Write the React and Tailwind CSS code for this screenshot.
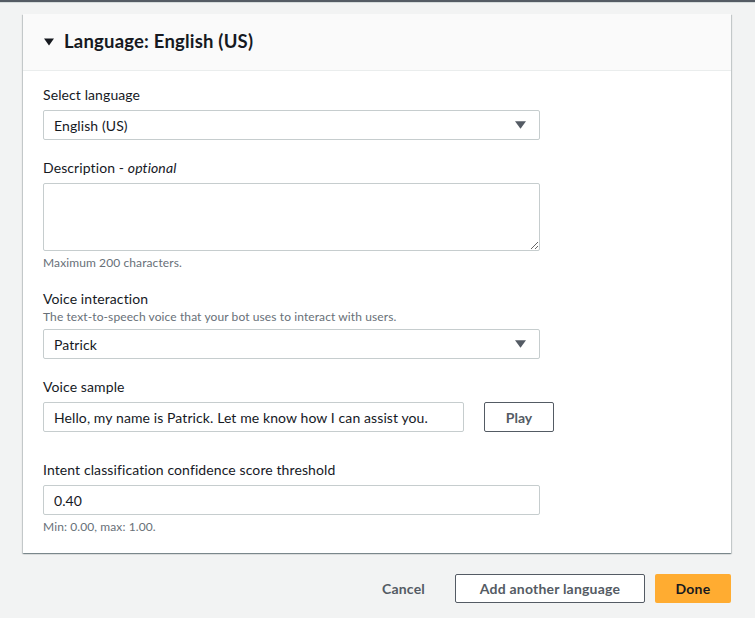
import { useState } from "react";

const font = { fontFamily: "Lato, 'Open Sans', sans-serif" };

function Caret({ className }) {
  return (
    <svg viewBox="0 0 10 7" className={className} fill="currentColor">
      <path d="M0 0 L10 0 L5 7 Z" />
    </svg>
  );
}

function Field({ label, description, constraint, children, className = "" }) {
  return (
    <div className={"flex flex-col " + className}>
      <label className="text-[14px] leading-[20px] text-[#16191f] tracking-[0.1px]">{label}</label>
      {description && (
        <div className="text-[12px] leading-[16px] text-[#687078] tracking-[0.1px]">{description}</div>
      )}
      <div className={description ? "mt-[4px]" : "mt-[5px]"}>{children}</div>
      {constraint && (
        <div className="mt-[4px] text-[12px] leading-[16px] text-[#687078] tracking-[0.1px]">{constraint}</div>
      )}
    </div>
  );
}

function Select({ value }) {
  return (
    <div className="w-[497px] h-[30px] border border-[#c6cdce] rounded-[2px] bg-white flex items-center justify-between pl-[10px] pr-[13px] text-[14px] text-[#16191f] tracking-[0.1px]">
      <span>{value}</span>
      <Caret className="w-[11px] h-[8px] text-[#545b64]" />
    </div>
  );
}

export default function App() {
  const [sample, setSample] = useState(
    "Hello, my name is Patrick. Let me know how I can assist you."
  );
  const [threshold, setThreshold] = useState("0.40");

  return (
    <div style={font} className="w-[755px] h-[618px] bg-[#f2f3f3] overflow-hidden">
      <div className="h-[2px] bg-[#545b64]" />
      <div className="h-[1px] bg-[#d5dbdb]" />
      <div className="ml-[23px] mt-[11px] w-[708px] bg-white shadow-[0_1px_1px_0_rgba(0,28,36,0.3),1px_1px_1px_0_rgba(0,28,36,0.15),-1px_1px_1px_0_rgba(0,28,36,0.15)]">
        <div className="h-[57px] bg-[#fafafa] border-b border-[#eaeded] flex items-center pl-[21px] gap-[10px]">
          <Caret className="w-[10px] h-[8px] text-[#16191f]" />
          <h2 className="text-[18.5px] font-bold text-[#16191f] tracking-[0.2px]">
            Language: English (US)
          </h2>
        </div>
        <div className="pl-[20px] pt-[14px] pb-[18px] flex flex-col">
          <Field label="Select language">
            <Select value="English (US)" />
          </Field>
          <Field
            className="mt-[18px]"
            label={
              <>
                Description - <i>optional</i>
              </>
            }
            constraint="Maximum 200 characters."
          >
            <textarea className="block w-[497px] h-[68px] border border-[#c6cdce] rounded-[2px] resize-y outline-none px-[10px] py-[4px] text-[14px]" />
          </Field>
          <Field
            className="mt-[18px]"
            label="Voice interaction"
            description="The text-to-speech voice that your bot uses to interact with users."
          >
            <Select value="Patrick" />
          </Field>
          <Field className="mt-[18px]" label="Voice sample">
            <div className="flex items-center gap-[20px]">
              <input
                value={sample}
                onChange={(e) => setSample(e.target.value)}
                className="w-[421px] h-[30px] border border-[#c6cdce] rounded-[2px] px-[10px] text-[14px] text-[#16191f] tracking-[0.1px] outline-none"
              />
              <button className="w-[70px] h-[30px] border border-[#545b64] rounded-[2px] text-[14px] font-bold text-[#545b64] bg-white">
                Play
              </button>
            </div>
          </Field>
          <Field
            className="mt-[28px]"
            label="Intent classification confidence score threshold"
            constraint="Min: 0.00, max: 1.00."
          >
            <input
              value={threshold}
              onChange={(e) => setThreshold(e.target.value)}
              className="w-[497px] h-[30px] border border-[#c6cdce] rounded-[2px] px-[10px] text-[14px] text-[#16191f] tracking-[0.1px] outline-none"
            />
          </Field>
        </div>
      </div>
      <div className="w-[731px] mt-[21px] flex justify-end items-center gap-[10px]">
        <button className="h-[29px] px-[20px] text-[14px] font-bold text-[#545b64] tracking-[0.2px]">Cancel</button>
        <button className="h-[29px] w-[190px] border border-[#545b64] rounded-[2px] bg-white text-[14px] font-bold text-[#545b64] tracking-[0.2px]">
          Add another language
        </button>
        <button className="h-[29px] w-[76px] rounded-[2px] bg-[#ffac31] text-[14px] font-bold text-[#16191f] tracking-[0.2px]">
          Done
        </button>
      </div>
    </div>
  );
}
